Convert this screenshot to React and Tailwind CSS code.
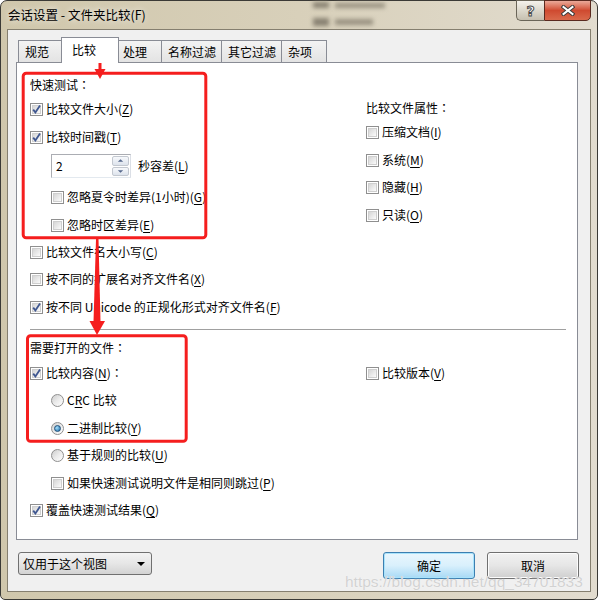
import React from "react";

const font = "font-['Noto_Sans_CJK_SC','Noto_Sans',sans-serif]";

function Key({ children }) {
  return <span className="underline decoration-1 underline-offset-[2px]">{children}</span>;
}

// full-width colon drawn centred, as in the Windows UI font
function Colon() {
  return <span className="font-['Noto_Sans_CJK_TC',sans-serif]">：</span>;
}

function CheckBox({ checked }) {
  return (
    <span className="relative flex h-[13px] w-[13px] shrink-0 border border-[#8f8f8f] bg-white p-px">
      <span className="block h-full w-full border border-[#cfcfcf] bg-linear-to-br from-[#d6d6d6] to-[#fbfbfb]" />
      {checked && (
        <svg className="absolute -left-px -top-px" width="13" height="13" viewBox="0 0 13 13">
          <path d="M3.2 6.6 L5.4 9.4 L10 2.6" fill="none" stroke="#3f5790" strokeWidth="1.8" />
        </svg>
      )}
    </span>
  );
}

function Radio({ checked }) {
  return (
    <span className="flex h-[13px] w-[13px] shrink-0 items-center justify-center rounded-full border border-[#8f8f8f] bg-linear-to-br from-[#cdcdcd] via-[#ebebeb] to-white">
      {checked && (
        <span className="h-[7px] w-[7px] rounded-full border border-[#1f4f7a] bg-radial-[at_35%_35%] from-[#a6e0fb] to-[#1a68a6]" />
      )}
    </span>
  );
}

function Row({ className = "", children }) {
  return <div className={"flex h-4 items-center " + className}>{children}</div>;
}

function Check({ checked, className = "", children }) {
  return (
    <Row className={className}>
      <CheckBox checked={checked} />
      <span className="ml-[3px] whitespace-nowrap leading-4">{children}</span>
    </Row>
  );
}

function Option({ checked, className = "", children }) {
  return (
    <Row className={className}>
      <Radio checked={checked} />
      <span className="ml-[3px] whitespace-nowrap leading-4">{children}</span>
    </Row>
  );
}

function Spin() {
  return (
    <div className="flex h-[24px] w-[80px] border border-[#abadb3] border-r-[#dbdfe6] border-b-[#e3e9ef] bg-white">
      <span className="flex flex-1 items-center pl-[4px] leading-4">2</span>
      <div className="flex w-[18px] flex-col gap-px py-px pr-px">
        {["M2 4 L5 1 L8 4Z", "M2 1 L5 4 L8 1Z"].map((d) => (
          <span
            key={d}
            className="flex flex-1 items-center justify-center rounded-[2px] border border-[#c3c8d0] bg-linear-to-b from-[#f7f9fc] to-[#dde3ec]"
          >
            <svg width="9" height="5" viewBox="0 0 10 5">
              <path d={d} fill="#56688c" />
            </svg>
          </span>
        ))}
      </div>
    </div>
  );
}

const tabs = [
  { label: "规范", w: "w-[45px]" },
  { label: "比较", w: "w-[58px]", active: true },
  { label: "处理", w: "w-[45px]" },
  { label: "名称过滤", w: "w-[60px]" },
  { label: "其它过滤", w: "w-[60px]" },
  { label: "杂项", w: "w-[45px]" },
];

export default function App() {
  return (
    <div className={`${font} relative h-[600px] w-[598px] overflow-hidden bg-white text-[12px] text-black`}>
      <div className="relative flex h-full w-full flex-col rounded-t-[7px] rounded-b-[5px] border border-[#3b3a36] bg-linear-to-r from-[#d0c7ac] via-[#d8d0ba] to-[#e2dccf]">
        {/* blurred windows behind the glass */}
        <div className="absolute left-[312px] top-[1px] h-[6px] w-[16px] bg-[#8a8373] blur-[2px]" />
        <div className="absolute left-[334px] top-[2px] h-[5px] w-[50px] bg-[#9a9382] blur-[2px]" />
        <div className="absolute left-[312px] top-[17px] h-[8px] w-[16px] bg-[#8a8373] blur-[2px]" />
        <div className="absolute left-[334px] top-[18px] h-[6px] w-[38px] bg-[#9a9382] blur-[2px]" />

        <div className="relative flex h-[28px] items-start">
          <span className="ml-[7px] mt-[6px] whitespace-nowrap text-[12.5px] leading-4 [text-shadow:0_0_6px_#fff]">
            会话设置 - 文件夹比较(F)
          </span>
          <div className="-mt-px ml-auto mr-[6px] flex">
            <div className="flex h-[21px] w-[28px] items-center justify-center rounded-bl-[5px] border border-r-0 border-[#6a6558] bg-linear-to-b from-[#f4f2ec] via-[#dcd8cc] to-[#c6c0b0]">
              <span className="font-['DejaVu_Sans',sans-serif] text-[14px] font-bold leading-none text-white [-webkit-text-stroke:1px_#4a4a4a]">
                ?
              </span>
            </div>
            <div className="flex h-[21px] w-[47px] items-center justify-center rounded-br-[5px] border border-[#5a2a20] bg-linear-to-b from-[#eaa999] via-[#cf4a30] to-[#d9694b]">
              <svg width="14" height="11" viewBox="0 0 14 11">
                <path d="M2.5 2 L11.5 9 M11.5 2 L2.5 9" stroke="#3a3a3a" strokeWidth="4" strokeLinecap="square" />
                <path d="M2.5 2 L11.5 9 M11.5 2 L2.5 9" stroke="#fff" strokeWidth="2" strokeLinecap="square" />
              </svg>
            </div>
          </div>
        </div>

        <div className="relative ml-[6px] flex h-[563px] w-[584px] flex-col border border-[#857f6f] bg-[#f0f0f0] pl-[8px]">
          <div className="ml-[2px] flex h-[32px] items-end">
            {tabs.map((t) =>
              t.active ? (
                <div
                  key={t.label}
                  className={`${t.w} relative z-10 -mx-[2px] -mb-px flex h-[26px] items-start border border-b-0 border-[#898c95] bg-white pl-[10px] pt-[4px] leading-4`}
                >
                  {t.label}
                </div>
              ) : (
                <div
                  key={t.label}
                  className={`${t.w} flex h-[22px] items-center border border-b-0 border-l-0 border-[#898c95] bg-linear-to-b from-[#f3f3f3] to-[#e3e3e3] pl-[6px] leading-4 first:border-l`}
                >
                  {t.label}
                </div>
              )
            )}
          </div>

          <div className="h-[478px] w-[562px] border border-[#898c95] bg-white">
            <div className="flex pl-[13px]">
              <div className="w-[336px]">
                <Row className="mt-[14px]">
                  <span className="leading-4">
                    快速测试<Colon />
                  </span>
                </Row>
                <Check checked className="mt-[8px]">
                  比较文件大小(<Key>Z</Key>)
                </Check>
                <Check checked className="mt-[12px]">
                  比较时间戳(<Key>T</Key>)
                </Check>
                <div className="mt-[9px] flex items-center pl-[21px]">
                  <Spin />
                  <span className="ml-[7px] leading-4">
                    秒容差(<Key>L</Key>)
                  </span>
                </div>
                <Check className="mt-[11px] pl-[21px]">
                  忽略夏令时差异(1小时)(<Key>G</Key>)
                </Check>
                <Check className="mt-[12px] pl-[21px]">
                  忽略时区差异(<Key>E</Key>)
                </Check>
                <Check className="mt-[11px]">
                  比较文件名大小写(<Key>C</Key>)
                </Check>
                <Check className="mt-[11px]">
                  按不同的扩展名对齐文件名(<Key>X</Key>)
                </Check>
                <Check checked className="mt-[12px]">
                  按不同 Unicode 的正规化形式对齐文件名(<Key>F</Key>)
                </Check>
              </div>
              <div>
                <Row className="mt-[37px]">
                  <span className="leading-4">
                    比较文件属性<Colon />
                  </span>
                </Row>
                <Check className="mt-[8px]">
                  压缩文档(<Key>I</Key>)
                </Check>
                <Check className="mt-[12px]">
                  系统(<Key>M</Key>)
                </Check>
                <Check className="mt-[11px]">
                  隐藏(<Key>H</Key>)
                </Check>
                <Check className="mt-[12px]">
                  只读(<Key>O</Key>)
                </Check>
              </div>
            </div>

            <div className="ml-[13px] mt-[14px] h-px w-[536px] bg-[#a0a0a0]" />

            <div className="pl-[13px]">
              <Row className="mt-[10px]">
                <span className="leading-4">
                  需要打开的文件<Colon />
                </span>
              </Row>
              <div className="mt-[9px] flex">
                <div className="w-[336px]">
                  <Check checked>
                    比较内容(<Key>N</Key>)<Colon />
                  </Check>
                </div>
                <Check>
                  比较版本(<Key>V</Key>)
                </Check>
              </div>
              <Option className="mt-[11px] pl-[21px]">
                C<Key>R</Key>C 比较
              </Option>
              <Option checked className="mt-[12px] pl-[21px]">
                二进制比较(<Key>Y</Key>)
              </Option>
              <Option className="mt-[11px] pl-[21px]">
                基于规则的比较(<Key>U</Key>)
              </Option>
              <Check className="mt-[12px] pl-[21px]">
                如果快速测试说明文件是相同则跳过(<Key>P</Key>)
              </Check>
              <Check checked className="mt-[11px]">
                覆盖快速测试结果(<Key>Q</Key>)
              </Check>
            </div>
          </div>

          <div className="mt-[12px] flex items-start">
            <div className="ml-[2px] flex h-[23px] w-[134px] items-center rounded-[3px] border border-[#707070] bg-linear-to-b from-[#f3f3f3] via-[#e6e6e6] to-[#d3d3d3] pl-[4px] pr-[6px]">
              <span className="leading-4">仅用于这个视图</span>
              <svg className="ml-auto" width="8" height="4" viewBox="0 0 8 4">
                <path d="M0 0 L8 0 L4 4Z" fill="#000" />
              </svg>
            </div>
            <div className="ml-auto flex h-[27px] w-[92px] items-center justify-center rounded-[3px] border border-[#3c7fb1] bg-linear-to-b from-[#eaf6fd] via-[#d9f0fc] to-[#a7d9f5] shadow-[inset_0_0_0_1px_#a9e3fb] leading-4">
              确定
            </div>
            <div className="ml-[12px] mr-[11px] flex h-[27px] w-[92px] items-center justify-center rounded-[3px] border border-[#707070] bg-linear-to-b from-[#f2f2f2] via-[#e6e6e6] to-[#cfcfcf] shadow-[inset_0_0_0_1px_#fcfcfc] leading-4">
              取消
            </div>
          </div>
        </div>
      </div>

      <svg className="pointer-events-none absolute left-0 top-0" width="598" height="600" viewBox="0 0 598 600">
        <g fill="none" stroke="#f51e1e" strokeWidth="3">
          <rect x="64.8" y="38.8" width="51" height="22" rx="3" />
          <rect x="23.2" y="73.2" width="182.6" height="164.6" rx="3" />
          <rect x="27.5" y="335.8" width="158.7" height="105.4" rx="3" />
        </g>
        <g fill="#f51e1e">
          <rect x="98.5" y="62" width="3" height="8" />
          <path d="M94.5 69 L105.5 69 L100 79Z" />
          <path d="M96 239 L98.5 239 L100.5 322 L93.5 322Z" />
          <path d="M89.5 321 L105 321 L97 335Z" />
        </g>
      </svg>

      <span className="pointer-events-none absolute left-[345px] top-[572px] whitespace-nowrap font-['Liberation_Sans',sans-serif] text-[15.5px] leading-5 text-[#d2d2d2] [text-shadow:0_0_1px_#fff]">
        https://blog.csdn.net/qq_34701833
      </span>
    </div>
  );
}
